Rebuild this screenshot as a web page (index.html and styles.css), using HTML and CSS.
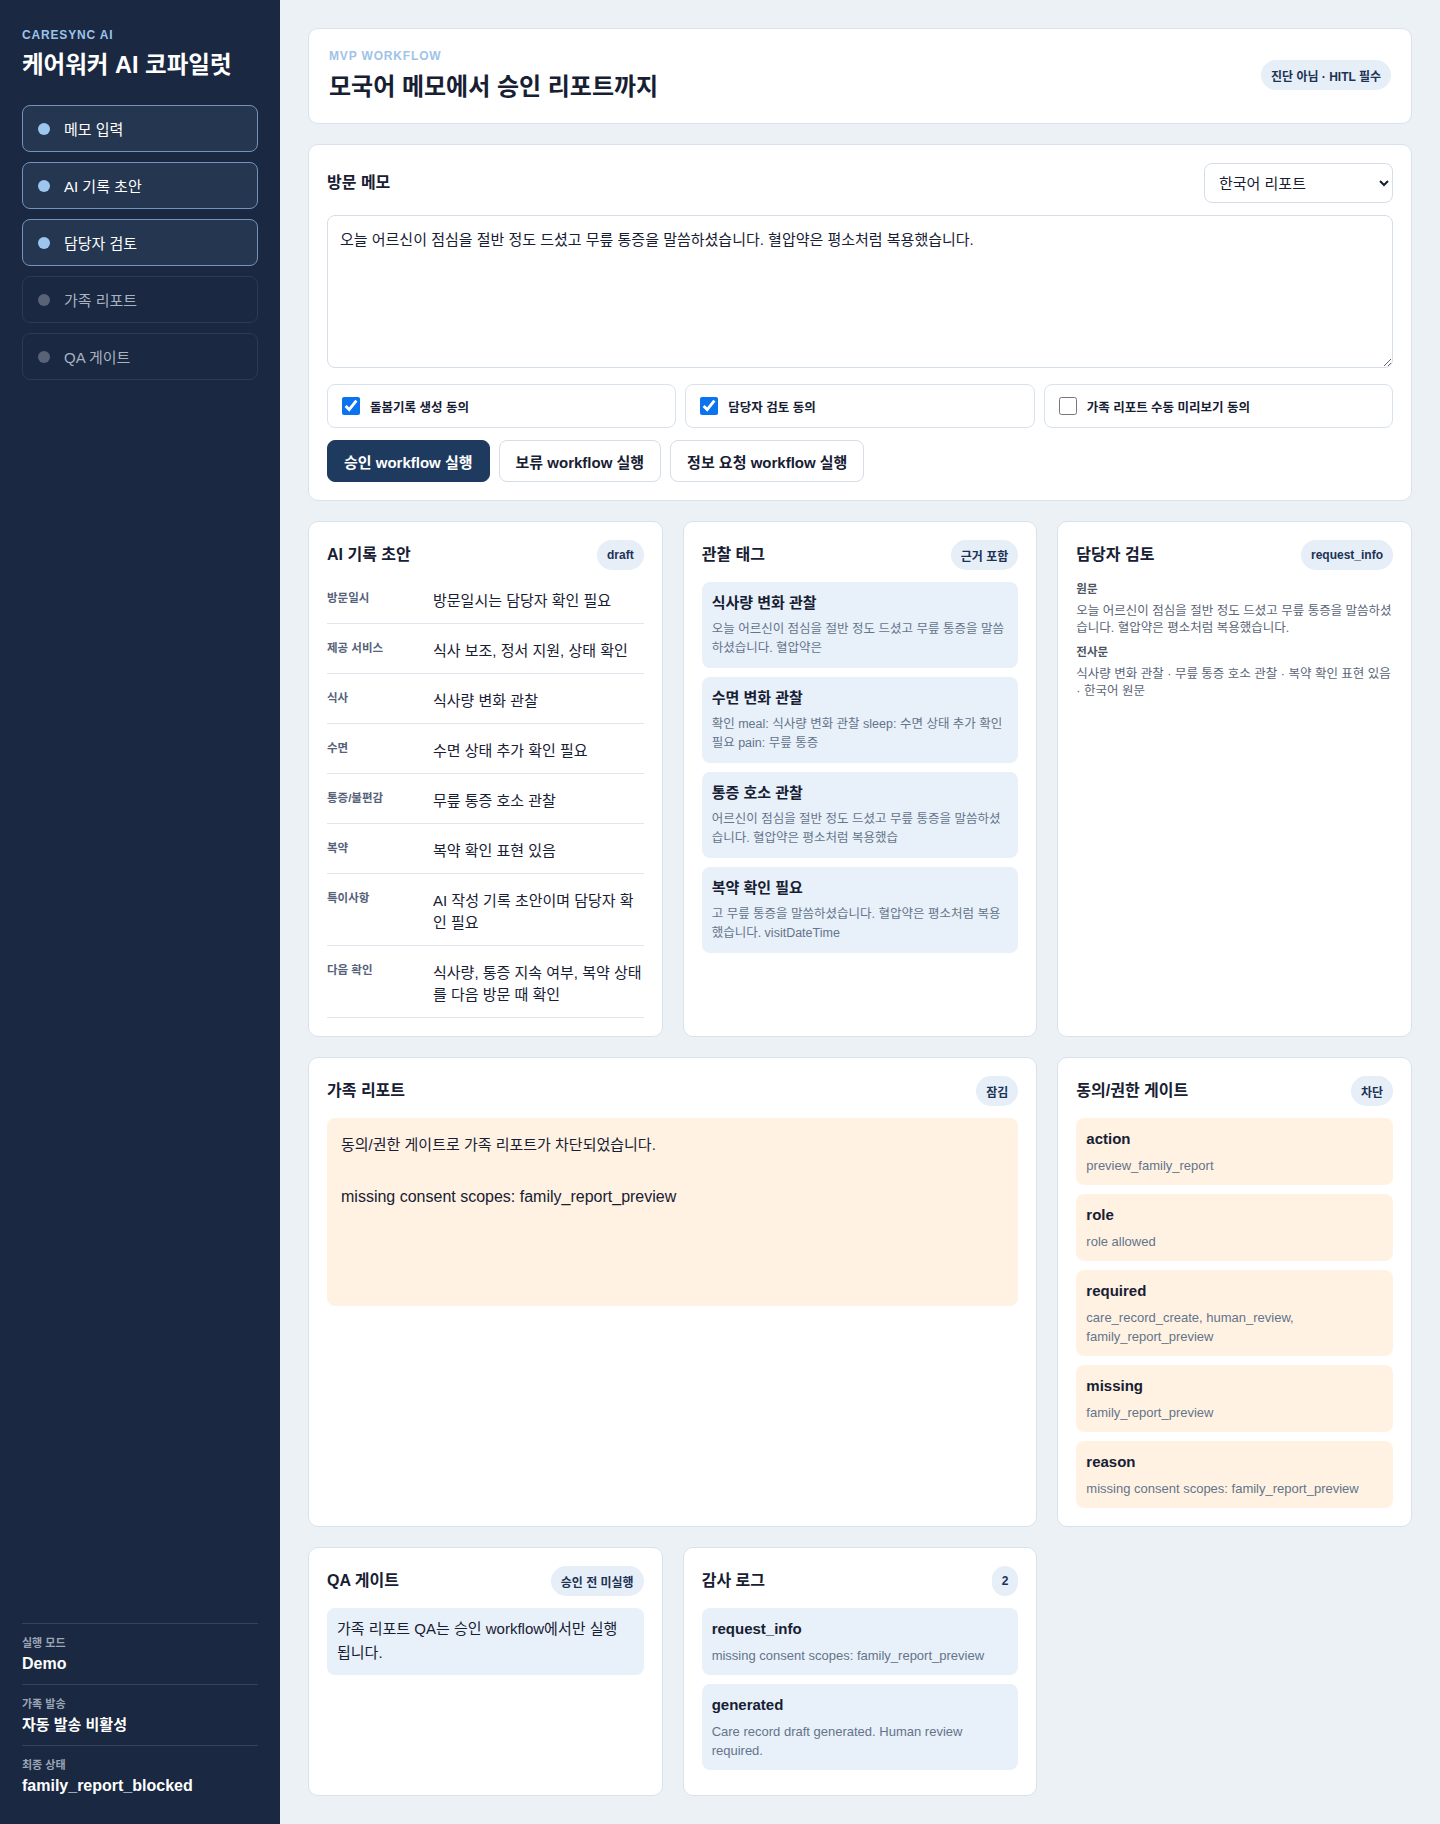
FILE: index.html
```html
<!DOCTYPE html>
<html lang="ko">
<head>
  <meta charset="UTF-8">
  <meta name="viewport" content="width=device-width, initial-scale=1.0">
  <title>CareSync AI · 케어워커 AI 코파일럿</title>
  <link rel="stylesheet" href="styles.css">
</head>
<body>
  <aside class="sidebar">
    <div class="brand">CARESYNC AI</div>
    <h1 class="app-title">케어워커 AI 코파일럿</h1>
    <nav class="steps">
      <div class="step active"><span class="dot"></span>메모 입력</div>
      <div class="step active"><span class="dot"></span>AI 기록 초안</div>
      <div class="step active"><span class="dot"></span>담당자 검토</div>
      <div class="step"><span class="dot"></span>가족 리포트</div>
      <div class="step"><span class="dot"></span>QA 게이트</div>
    </nav>
    <div class="meta">
      <div class="meta-item">
        <div class="meta-label">실행 모드</div>
        <div class="meta-value">Demo</div>
      </div>
      <div class="meta-item">
        <div class="meta-label">가족 발송</div>
        <div class="meta-value ko">자동 발송 비활성</div>
      </div>
      <div class="meta-item">
        <div class="meta-label">최종 상태</div>
        <div class="meta-value">family_report_blocked</div>
      </div>
    </div>
  </aside>

  <main class="main">
    <section class="card hero">
      <div>
        <div class="eyebrow">MVP WORKFLOW</div>
        <h2 class="hero-title">모국어 메모에서 승인 리포트까지</h2>
      </div>
      <span class="badge">진단 아님 · HITL 필수</span>
    </section>

    <section class="card memo">
      <div class="card-head">
        <h3>방문 메모</h3>
        <select class="lang">
          <option>한국어 리포트</option>
        </select>
      </div>
      <textarea class="memo-input">오늘 어르신이 점심을 절반 정도 드셨고 무릎 통증을 말씀하셨습니다. 혈압약은 평소처럼 복용했습니다.</textarea>
      <div class="consents">
        <label class="consent"><input type="checkbox" checked>돌봄기록 생성 동의</label>
        <label class="consent"><input type="checkbox" checked>담당자 검토 동의</label>
        <label class="consent"><input type="checkbox">가족 리포트 수동 미리보기 동의</label>
      </div>
      <div class="actions">
        <button class="btn primary">승인 workflow 실행</button>
        <button class="btn">보류 workflow 실행</button>
        <button class="btn">정보 요청 workflow 실행</button>
      </div>
    </section>

    <div class="grid">
      <section class="card">
        <div class="card-head">
          <h3>AI 기록 초안</h3>
          <span class="badge">draft</span>
        </div>
        <div class="fields">
          <div class="field"><span class="field-label">방문일시</span><span class="field-value">방문일시는 담당자 확인 필요</span></div>
          <div class="field"><span class="field-label">제공 서비스</span><span class="field-value">식사 보조, 정서 지원, 상태 확인</span></div>
          <div class="field"><span class="field-label">식사</span><span class="field-value">식사량 변화 관찰</span></div>
          <div class="field"><span class="field-label">수면</span><span class="field-value">수면 상태 추가 확인 필요</span></div>
          <div class="field"><span class="field-label">통증/불편감</span><span class="field-value">무릎 통증 호소 관찰</span></div>
          <div class="field"><span class="field-label">복약</span><span class="field-value">복약 확인 표현 있음</span></div>
          <div class="field"><span class="field-label">특이사항</span><span class="field-value">AI 작성 기록 초안이며 담당자 확인 필요</span></div>
          <div class="field"><span class="field-label">다음 확인</span><span class="field-value">식사량, 통증 지속 여부, 복약 상태를 다음 방문 때 확인</span></div>
        </div>
      </section>

      <section class="card">
        <div class="card-head">
          <h3>관찰 태그</h3>
          <span class="badge">근거 포함</span>
        </div>
        <div class="items tags">
          <div class="item">
            <div class="item-title">식사량 변화 관찰</div>
            <div class="item-desc">오늘 어르신이 점심을 절반 정도 드셨고 무릎 통증을 말씀하셨습니다. 혈압약은</div>
          </div>
          <div class="item">
            <div class="item-title">수면 변화 관찰</div>
            <div class="item-desc">확인 meal: 식사량 변화 관찰 sleep: 수면 상태 추가 확인 필요 pain: 무릎 통증</div>
          </div>
          <div class="item">
            <div class="item-title">통증 호소 관찰</div>
            <div class="item-desc">어르신이 점심을 절반 정도 드셨고 무릎 통증을 말씀하셨습니다. 혈압약은 평소처럼 복용했습</div>
          </div>
          <div class="item">
            <div class="item-title">복약 확인 필요</div>
            <div class="item-desc">고 무릎 통증을 말씀하셨습니다. 혈압약은 평소처럼 복용했습니다. visitDateTime</div>
          </div>
        </div>
      </section>

      <section class="card">
        <div class="card-head">
          <h3>담당자 검토</h3>
          <span class="badge">request_info</span>
        </div>
        <div class="review-label">원문</div>
        <p class="review-text">오늘 어르신이 점심을 절반 정도 드셨고 무릎 통증을 말씀하셨습니다. 혈압약은 평소처럼 복용했습니다.</p>
        <div class="review-label">전사문</div>
        <p class="review-text">식사량 변화 관찰 · 무릎 통증 호소 관찰 · 복약 확인 표현 있음 · 한국어 원문</p>
      </section>

      <section class="card wide">
        <div class="card-head">
          <h3>가족 리포트</h3>
          <span class="badge">잠김</span>
        </div>
        <div class="report-box">동의/권한 게이트로 가족 리포트가 차단되었습니다.

<span class="latin">missing consent scopes: family_report_preview</span></div>
      </section>

      <section class="card">
        <div class="card-head">
          <h3>동의/권한 게이트</h3>
          <span class="badge">차단</span>
        </div>
        <div class="items">
          <div class="item warm">
            <div class="item-title">action</div>
            <div class="item-desc">preview_family_report</div>
          </div>
          <div class="item warm">
            <div class="item-title">role</div>
            <div class="item-desc">role allowed</div>
          </div>
          <div class="item warm">
            <div class="item-title">required</div>
            <div class="item-desc">care_record_create, human_review, family_report_preview</div>
          </div>
          <div class="item warm">
            <div class="item-title">missing</div>
            <div class="item-desc">family_report_preview</div>
          </div>
          <div class="item warm">
            <div class="item-title">reason</div>
            <div class="item-desc">missing consent scopes: family_report_preview</div>
          </div>
        </div>
      </section>

      <section class="card">
        <div class="card-head">
          <h3>QA 게이트</h3>
          <span class="badge">승인 전 미실행</span>
        </div>
        <div class="qa-box">가족 리포트 QA는 승인 workflow에서만 실행됩니다.</div>
      </section>

      <section class="card">
        <div class="card-head">
          <h3>감사 로그</h3>
          <span class="badge">2</span>
        </div>
        <div class="items">
          <div class="item">
            <div class="item-title">request_info</div>
            <div class="item-desc">missing consent scopes: family_report_preview</div>
          </div>
          <div class="item">
            <div class="item-title">generated</div>
            <div class="item-desc">Care record draft generated. Human review required.</div>
          </div>
        </div>
      </section>
    </div>
  </main>
</body>
</html>
```

FILE: styles.css
```css
* {
  box-sizing: border-box;
}

body {
  margin: 0;
  display: flex;
  min-height: 100vh;
  background: #ecf1f6;
  color: #172033;
  font-family: "Liberation Sans", "Noto Sans CJK KR", sans-serif;
}

/* sidebar */
.sidebar {
  width: 280px;
  flex-shrink: 0;
  display: flex;
  flex-direction: column;
  padding: 27px 22px 18px;
  background: #1a2841;
  color: #ffffff;
}

.brand {
  font-size: 12px;
  line-height: 16px;
  font-weight: 700;
  letter-spacing: 0.07em;
  color: #9cc3ea;
}

.app-title {
  margin: 8px 0 26px;
  font-size: 23.5px;
  line-height: 28px;
  font-weight: 700;
}

.steps {
  display: flex;
  flex-direction: column;
  gap: 10px;
}

.step {
  height: 47px;
  display: flex;
  align-items: center;
  gap: 14px;
  padding: 0 15px;
  border: 1px solid #2c3b53;
  border-radius: 8px;
  font-size: 15px;
  color: #a9b2c0;
}

.step.active {
  background: #253650;
  border-color: #7393ba;
  color: #ffffff;
}

.dot {
  width: 12px;
  height: 12px;
  border-radius: 50%;
  background: #586378;
}

.step.active .dot {
  background: #9cc6ee;
}

.meta {
  margin-top: auto;
}

.meta-item {
  border-top: 1px solid #34445c;
  padding: 12px 0 10px;
}

.meta-label {
  font-size: 11px;
  line-height: 14px;
  font-weight: 700;
  color: #9aa5b5;
}

.meta-value {
  margin-top: 4px;
  font-size: 16px;
  line-height: 20px;
  font-weight: 700;
}

.meta-value.ko {
  font-size: 15px;
}

/* main */
.main {
  flex: 1;
  display: flex;
  flex-direction: column;
  gap: 20px;
  padding: 28px;
}

.card {
  background: #ffffff;
  border: 1px solid #d9e2ec;
  border-radius: 10px;
  padding: 18px;
}

.hero {
  display: flex;
  justify-content: space-between;
  align-items: center;
  padding: 19px 20px 21px;
}

.eyebrow {
  font-size: 12px;
  line-height: 16px;
  font-weight: 700;
  letter-spacing: 0.07em;
  color: #9fc3e8;
}

.hero-title {
  margin: 8px 0 0;
  font-size: 24px;
  line-height: 30px;
  font-weight: 700;
}

.badge {
  display: inline-flex;
  align-items: center;
  height: 30px;
  padding: 0 10px;
  border-radius: 15px;
  background: #e6eef8;
  color: #1c3354;
  font-size: 12px;
  font-weight: 700;
  white-space: nowrap;
}

.card-head {
  display: flex;
  justify-content: space-between;
  align-items: center;
  min-height: 30px;
  margin-bottom: 12px;
}

.card-head h3 {
  margin: 0;
  font-size: 16px;
  line-height: 22px;
  font-weight: 700;
}

/* memo */
.lang {
  width: 189px;
  height: 40px;
  padding: 0 10px;
  border: 1px solid #d5dde7;
  border-radius: 8px;
  background: #ffffff;
  color: #172033;
  font-family: inherit;
  font-size: 15px;
}

.memo-input {
  display: block;
  width: 100%;
  height: 153px;
  padding: 13px 12px;
  border: 1px solid #d5dde7;
  border-radius: 8px;
  color: #172033;
  font-family: inherit;
  font-size: 15px;
  line-height: 22px;
  resize: vertical;
}

.consents {
  display: grid;
  grid-template-columns: repeat(3, 1fr);
  gap: 9px;
  margin-top: 16px;
}

.consent {
  height: 44px;
  display: flex;
  align-items: center;
  gap: 10px;
  padding: 0 14px;
  border: 1px solid #d9e2ec;
  border-radius: 8px;
  font-size: 12.5px;
  font-weight: 700;
}

.consent input {
  width: 18px;
  height: 18px;
  margin: 0;
  accent-color: #0b72f0;
}

.actions {
  display: flex;
  gap: 9px;
  margin-top: 12px;
}

.btn {
  height: 42px;
  padding: 0 16px;
  border: 1px solid #d5dde7;
  border-radius: 8px;
  background: #ffffff;
  color: #172033;
  font-family: inherit;
  font-size: 15px;
  font-weight: 700;
}

.btn.primary {
  background: #1f3a5f;
  border-color: #1f3a5f;
  color: #ffffff;
}

/* result cards */
.grid {
  flex: 1;
  display: grid;
  grid-template-columns: repeat(3, 1fr);
  grid-template-rows: auto auto 1fr;
  gap: 20px;
}

.wide {
  grid-column: span 2;
}

.fields {
  display: flex;
  flex-direction: column;
  gap: 8px;
}

.field {
  display: grid;
  grid-template-columns: 94px 1fr;
  column-gap: 12px;
  padding: 8px 0 11px;
  border-bottom: 1px solid #dfe6ee;
}

.field-label {
  font-size: 11.5px;
  line-height: 16px;
  font-weight: 700;
  color: #56627a;
}

.field-value {
  font-size: 15px;
  line-height: 22px;
}

.items {
  display: flex;
  flex-direction: column;
  gap: 9px;
}

.item {
  padding: 11px 10px 10px;
  border-radius: 8px;
  background: #e8f0f9;
}

.item.warm {
  background: #fff2e2;
}

.item-title {
  font-size: 15px;
  line-height: 20px;
  font-weight: 700;
}

.item-desc {
  margin-top: 7px;
  font-size: 13px;
  line-height: 19px;
  color: #64748b;
}

.tags .item-desc {
  font-size: 12.5px;
}

.review-label {
  margin-bottom: 7px;
  font-size: 11.5px;
  line-height: 14px;
  font-weight: 700;
  color: #4b5563;
}

.review-text {
  margin: 0 0 8px;
  font-size: 12.5px;
  line-height: 17px;
  color: #5b6577;
}

.report-box {
  min-height: 188px;
  padding: 14px;
  border-radius: 8px;
  background: #fff2e2;
  font-size: 15px;
  line-height: 26px;
  white-space: pre-line;
}

.report-box .latin {
  font-size: 16px;
}

.qa-box {
  padding: 9px 20px 10px 10px;
  border-radius: 8px;
  background: #e8f0f9;
  font-size: 15px;
  line-height: 24px;
}
```
